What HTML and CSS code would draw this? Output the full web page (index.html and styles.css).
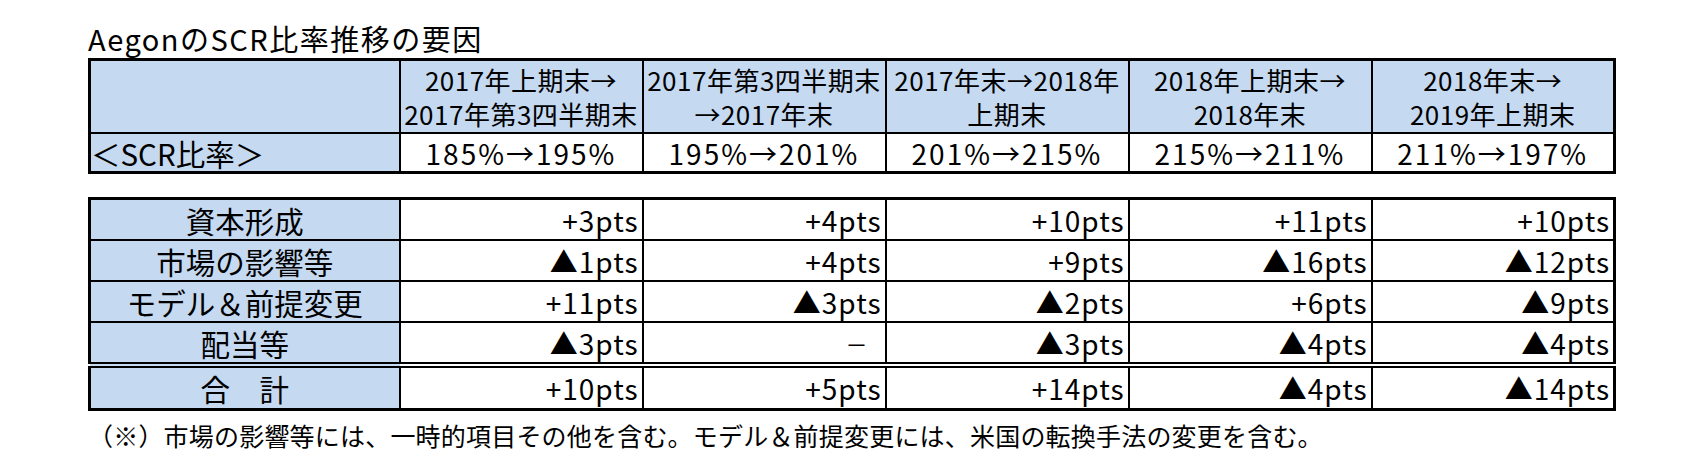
FILE: index.html
```html
<!DOCTYPE html>
<html lang="ja">
<head>
<meta charset="utf-8">
<title>AegonのSCR比率推移の要因</title>
<link rel="stylesheet" href="styles.css">
</head>
<body>
<div class="page">
  <div class="title">AegonのSCR比率推移の要因</div>
  <table class="grid top">
    <colgroup><col class="c-label"><col class="c-p"><col class="c-p"><col class="c-p"><col class="c-p"><col class="c-p"></colgroup>
    <tr class="head">
      <td class="blue"></td>
      <td class="blue center"><div class="ln">2017年上期末→</div><div class="ln">2017年第3四半期末</div></td>
      <td class="blue center"><div class="ln">2017年第3四半期末</div><div class="ln">→2017年末</div></td>
      <td class="blue center"><div class="ln">2017年末→2018年</div><div class="ln">上期末</div></td>
      <td class="blue center"><div class="ln">2018年上期末→</div><div class="ln">2018年末</div></td>
      <td class="blue center"><div class="ln">2018年末→</div><div class="ln">2019年上期末</div></td>
    </tr>
    <tr class="scr">
      <td class="blue lab-left">＜SCR比率＞</td>
      <td class="center">185%→195%</td>
      <td class="center">195%→201%</td>
      <td class="center">201%→215%</td>
      <td class="center">215%→211%</td>
      <td class="center">211%→197%</td>
    </tr>
  </table>
  <table class="grid bottom">
    <colgroup><col class="c-label"><col class="c-p"><col class="c-p"><col class="c-p"><col class="c-p"><col class="c-p"></colgroup>
    <tr class="row">
      <td class="blue lab">資本形成</td>
      <td class="num">+3pts</td><td class="num">+4pts</td><td class="num">+10pts</td><td class="num">+11pts</td><td class="num">+10pts</td>
    </tr>
    <tr class="row">
      <td class="blue lab">市場の影響等</td>
      <td class="num">▲1pts</td><td class="num">+4pts</td><td class="num">+9pts</td><td class="num">▲16pts</td><td class="num">▲12pts</td>
    </tr>
    <tr class="row">
      <td class="blue lab">モデル＆前提変更</td>
      <td class="num">+11pts</td><td class="num">▲3pts</td><td class="num">▲2pts</td><td class="num">+6pts</td><td class="num">▲9pts</td>
    </tr>
    <tr class="row">
      <td class="blue lab">配当等</td>
      <td class="num">▲3pts</td><td class="num dash">－</td><td class="num">▲3pts</td><td class="num">▲4pts</td><td class="num">▲4pts</td>
    </tr>
    <tr class="row total">
      <td class="blue lab">合　計</td>
      <td class="num">+10pts</td><td class="num">+5pts</td><td class="num">+14pts</td><td class="num">▲4pts</td><td class="num">▲14pts</td>
    </tr>
  </table>
  <div class="note">（※）市場の影響等には、一時的項目その他を含む。モデル＆前提変更には、米国の転換手法の変更を含む。</div>
</div>
</body>
</html>
```
FILE: styles.css
```css
html, body {
  margin: 0;
  padding: 0;
  background: #ffffff;
}
body {
  font-family: "Noto Sans CJK JP", "Noto Sans", sans-serif;
  color: #000;
}
.page {
  padding: 18px 0 0 88px;
}
.title {
  font-size: 29px;
  line-height: 40px;
  letter-spacing: 1.5px;
}
.grid {
  border-collapse: collapse;
  table-layout: fixed;
  width: 1526px;
  border: 3px solid #000;
}
.c-label { width: 310px; }
.c-p { width: 243px; }
.grid td {
  border: 2px solid #000;
  padding: 0 3px;
  white-space: nowrap;
}
.blue { background: #c5d9f1; }
.center { text-align: center; }
.head td {
  height: 71px;
  font-size: 26px;
  letter-spacing: 0.5px;
}
.head .ln {
  height: 34px;
  line-height: 34px;
}
.scr td {
  height: 37px;
  font-size: 28px;
  line-height: 36px;
  letter-spacing: 2px;
}
.scr .lab-left {
  text-align: left;
  font-size: 29.5px;
  letter-spacing: 0;
  padding-left: 0;
}
.bottom {
  margin-top: 23px;
}
.row td {
  height: 39px;
  font-size: 28px;
  line-height: 38px;
  letter-spacing: 1px;
}
.row .lab {
  text-align: center;
  font-size: 29.5px;
  letter-spacing: 0;
}
.num { text-align: right; }
.row .dash {
  font-size: 22px;
  padding-right: 16px;
}
.total td {
  border-top: 6px double #000;
  height: 40px;
}
.note {
  font-size: 25px;
  line-height: 32px;
  margin-top: 8px;
  letter-spacing: 0.2px;
}
```
